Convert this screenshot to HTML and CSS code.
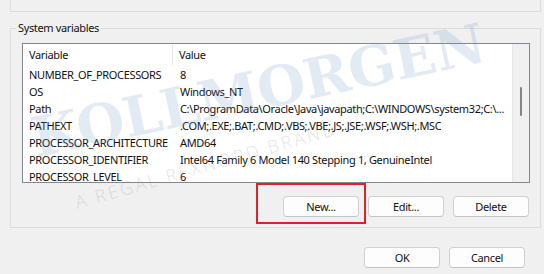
FILE: index.html
```html
<!DOCTYPE html>
<html>
<head>
<meta charset="utf-8">
<link rel="stylesheet" href="styles.css">
</head>
<body>
<div class="topbox"></div>
<fieldset class="group">
	<legend>System variables</legend>
	<div class="list">
		<div class="cols">
			<div class="head">
				<div class="c1">Variable</div>
				<div class="c2">Value</div>
			</div>
			<div class="row"><div class="c1">NUMBER_OF_PROCESSORS</div><div class="c2">8</div></div>
			<div class="row"><div class="c1">OS</div><div class="c2">Windows_NT</div></div>
			<div class="row"><div class="c1">Path</div><div class="c2">C:\ProgramData\Oracle\Java\javapath;C:\WINDOWS\system32;C:\...</div></div>
			<div class="row"><div class="c1">PATHEXT</div><div class="c2">.COM;.EXE;.BAT;.CMD;.VBS;.VBE;.JS;.JSE;.WSF;.WSH;.MSC</div></div>
			<div class="row"><div class="c1">PROCESSOR_ARCHITECTURE</div><div class="c2">AMD64</div></div>
			<div class="row"><div class="c1">PROCESSOR_IDENTIFIER</div><div class="c2">Intel64 Family 6 Model 140 Stepping 1, GenuineIntel</div></div>
			<div class="row"><div class="c1">PROCESSOR_LEVEL</div><div class="c2">6</div></div>
		</div>
		<div class="scroll"><div class="thumb"></div></div>
	</div>
	<div class="btns">
		<button class="btn">New...</button>
		<button class="btn">Edit...</button>
		<button class="btn">Delete</button>
	</div>
</fieldset>
<div class="dlgbtns">
	<button class="btn">OK</button>
	<button class="btn">Cancel</button>
</div>

<div class="mark">KOLLMORGEN</div>
<div class="brand">A REGAL REXNORD BRAND</div>
<div class="hilite"></div>
</body>
</html>
```

FILE: styles.css
```css
html, body {margin:0; padding:0;}
body{
	width:544px;
	height:274px;
	overflow:hidden;
	background:#f0f0f0;
	font-family:"Noto Sans", "Open Sans", sans-serif;
	font-size:11px;
	letter-spacing:-0.35px;
	color:#111;
	position:relative;
}

.topbox{
	height:11px;
	width:529px;
	margin-left:10px;
	border:1px solid #dcdcdc;
	border-top:none;
}

.group{
	margin:8px 3px 0 10px;
	padding:0 10px 10px 11px;
	border:1px solid #dcdcdc;
	min-width:0;
}
.group legend{
	padding:0 2px;
	margin-left:-6px;
	line-height:16px;
	height:16px;
}

.list{
	margin-top:7px;
	height:138px;
	border:1px solid #828790;
	background:#fff;
	display:flex;
	overflow:hidden;
}
.cols{flex:1; min-width:0;}
.head, .row{
	display:flex;
	white-space:nowrap;
}
.head{height:22px; line-height:22px;}
.row{height:17px; line-height:17px;}
.c1{width:150px; padding-left:6px; flex:none; box-sizing:border-box;}
.c2{padding-left:7px; overflow:hidden;}
.head .c1{border-right:1px solid #e5e5e5; height:20px; margin-top:1px; line-height:20px;}
.head .c2{padding-left:6px;}

.scroll{
	width:16px;
	flex:none;
	background:#f0f0f0;
	border-left:1px solid #e6e6e6;
	position:relative;
}
.thumb{
	position:absolute;
	left:7px;
	top:43px;
	width:2px;
	height:29px;
	background:#858585;
	border-radius:1px;
}

.btns, .dlgbtns{
	display:flex;
	justify-content:flex-end;
	gap:9px;
}
.btns{margin-top:13px; padding-right:1px;}
.dlgbtns{margin-top:19px; padding-right:19px;}

.btn{
	width:76px;
	height:21px;
	padding:0;
	font:inherit;
	letter-spacing:inherit;
	color:#111;
	background:#fdfdfd;
	border:1px solid #d0d0d0;
	border-bottom-color:#c4c4c4;
	border-radius:4px;
}

/* watermark over the dialog */
.mark{
	position:absolute;
	left:38px;
	top:110px;
	font-family:"DejaVu Serif", serif;
	font-weight:bold;
	font-size:55px;
	line-height:56px;
	color:rgba(110,150,195,0.2);
	transform:rotate(-12deg);
	transform-origin:left bottom;
	white-space:nowrap;
	pointer-events:none;
}
.brand{
	position:absolute;
	left:78px;
	top:192px;
	font-family:"Noto Sans", sans-serif;
	font-weight:300;
	font-size:18px;
	line-height:20px;
	letter-spacing:2.5px;
	color:rgba(120,120,120,0.2);
	transform:rotate(-16deg);
	transform-origin:left bottom;
	white-space:nowrap;
	pointer-events:none;
}

.hilite{
	position:absolute;
	left:256px;
	top:183px;
	width:106px;
	height:37px;
	border:2px solid #e3202a;
}
```
